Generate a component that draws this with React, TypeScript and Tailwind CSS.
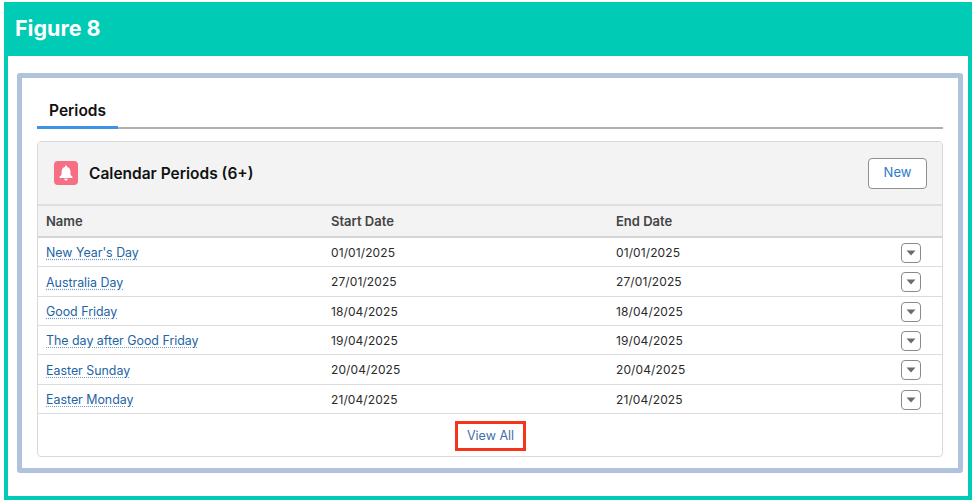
const rows = [
  ["New Year's Day", "01/01/2025"],
  ["Australia Day", "27/01/2025"],
  ["Good Friday", "18/04/2025"],
  ["The day after Good Friday", "19/04/2025"],
  ["Easter Sunday", "20/04/2025"],
  ["Easter Monday", "21/04/2025"],
];

function Bell() {
  return (
    <svg width="14" height="16" viewBox="0 0 14 16" fill="#fff">
      <path d="M7 0.5c-.6 0-1 .4-1 1v.5C3.8 2.5 2.6 4.3 2.6 6.4v2.4c0 1-.5 1.7-1.6 2.5-.4.3-.6.6-.6 1 0 .4.3.7.8.7h11.6c.5 0 .8-.3.8-.7 0-.4-.2-.7-.6-1-1.1-.8-1.6-1.5-1.6-2.5V6.4c0-2.1-1.2-3.9-3.4-4.4v-.5c0-.6-.4-1-1-1z" />
      <path d="M5.3 13.7h3.4c0 1-.8 1.8-1.7 1.8s-1.7-.8-1.7-1.8z" />
    </svg>
  );
}

export default function App() {
  return (
    <div className="w-[976px] h-[504px] bg-white pt-[2px] pl-[4px] font-['Inter','Liberation_Sans',sans-serif]">
      <div className="w-[968px] h-[498px] border-x-[4px] border-b-[4px] border-[#00cbb5] flex flex-col">
        <div className="h-[54px] -mx-[4px] bg-[#00cbb5] flex items-center pl-[11px] text-white text-[21.5px] font-bold leading-none shrink-0">
          Figure 8
        </div>
        <div className="flex-1 pt-[17px] pl-[9px] pr-[5px]">
          <div className="h-[400px] border-[5px] border-[#b0c2dc] rounded-[3px] bg-white pt-[20px] pl-[15px] pr-[15px]">
            <div className="h-[31px] border-b-2 border-[#b0b0b0] flex">
              <div className="w-[81px] h-[31px] border-b-[3px] border-[#3b93ea] pl-[12px] text-[15.5px] font-semibold text-[#111] leading-[26px]">
                Periods
              </div>
            </div>
            <div className="mt-[12px] h-[316px] border border-[#d9d9d9] rounded-[4px] overflow-hidden flex flex-col">
              <div className="h-[64px] shrink-0 bg-[#f3f3f3] border-b-2 border-[#dfdfdf] flex items-center pl-[16px] pr-[15px]">
                <div className="w-[24px] h-[24px] rounded-[4px] bg-[#f66f85] flex items-center justify-center">
                  <Bell />
                </div>
                <div className="ml-[11px] pt-[2px] text-[15.5px] font-semibold text-[#111]">Calendar Periods (6+)</div>
                <div className="ml-auto w-[59px] h-[31px] bg-white border border-[#8f8f8f] rounded-[4px] flex items-center justify-center text-[13px] text-[#2b7cc6]">
                  New
                </div>
              </div>
              <div className="h-[32px] shrink-0 bg-[#f3f3f3] border-b-2 border-[#d4d4d4] grid grid-cols-[285px_285px_1fr] pl-[8px] pt-[1px] items-center text-[13px] font-semibold text-[#444]">
                <div>Name</div>
                <div>Start Date</div>
                <div>End Date</div>
              </div>
              {rows.map(([name, date]) => (
                <div
                  key={name}
                  className="h-[29.33px] shrink-0 border-b border-[#dcdcdc] grid grid-cols-[285px_285px_1fr_41px] pl-[8px] items-center text-[12px] tracking-[0.1px] text-[#2b2b2b]"
                >
                  <div className="pt-[3px] text-[12.4px] tracking-normal text-[#1d64a5] underline decoration-dotted decoration-[#6f9cc6] underline-offset-2">{name}</div>
                  <div className="pt-[2px]">{date}</div>
                  <div className="pt-[2px]">{date}</div>
                  <div className="mt-[2px] w-[20px] h-[20px] bg-white border border-[#8a8a8a] rounded-[4px] flex items-center justify-center">
                    <svg width="10" height="6" viewBox="0 0 10 6" fill="#6b6b6b">
                      <path d="M0.5 0.5h9L5 5.5z" />
                    </svg>
                  </div>
                </div>
              ))}
              <div className="flex-1 flex items-start justify-center pt-[7px] pl-[1px]">
                <div className="w-[71px] h-[30px] border-[3px] border-[#f5341c] flex items-center justify-center text-[12.5px] text-[#3f6fa8]">
                  View All
                </div>
              </div>
            </div>
          </div>
        </div>
      </div>
    </div>
  );
}
